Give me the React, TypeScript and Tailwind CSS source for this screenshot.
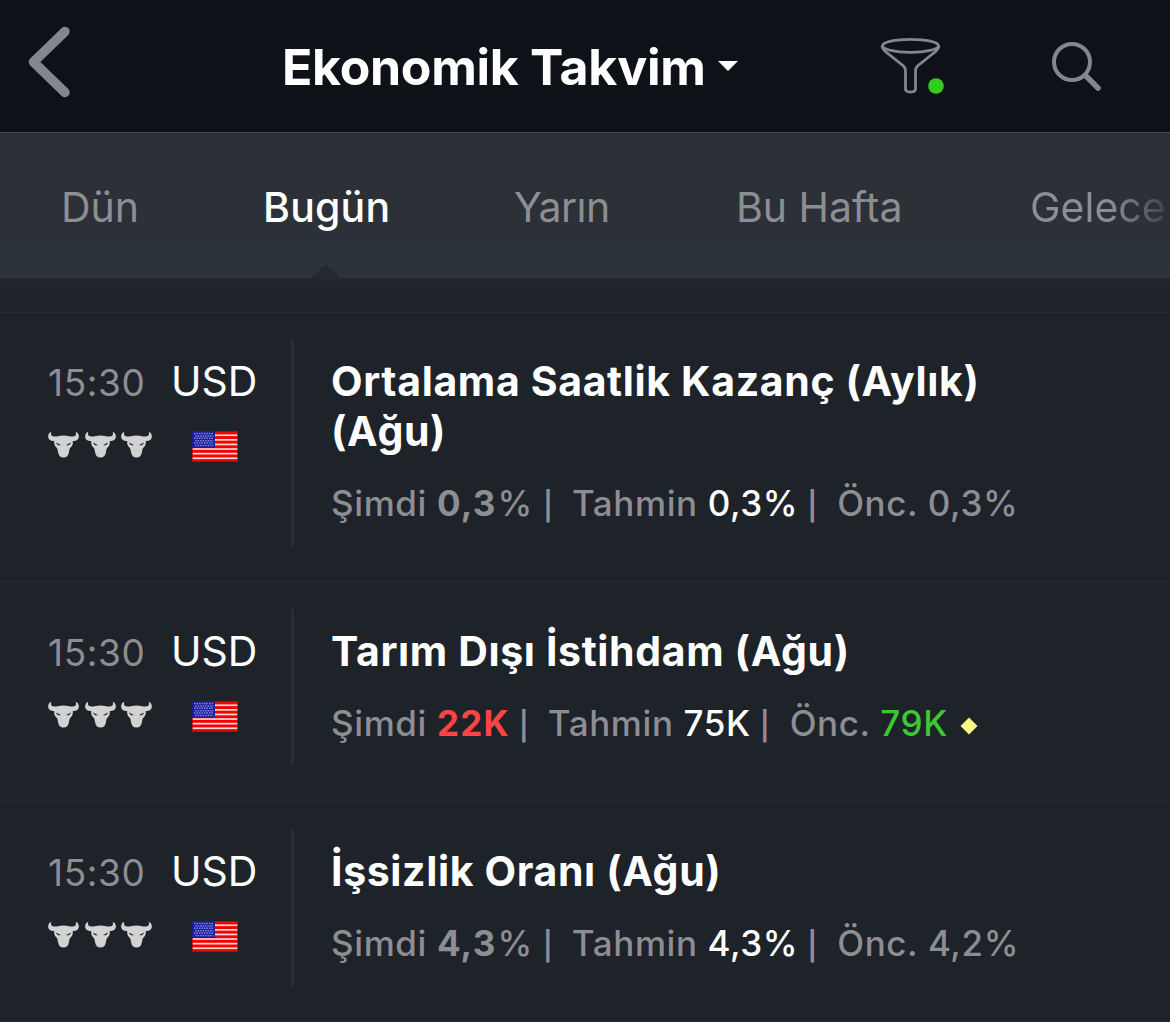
const tabs = [
  { label: "Dün", className: "ml-[61px] w-[202px] text-[#8d8e93]" },
  { label: "Bugün", className: "w-[251px] font-medium text-white tracking-[0.2px]" },
  { label: "Yarın", className: "w-[222px] text-[#8d8e93] tracking-[-0.5px]" },
  { label: "Bu Hafta", className: "w-[294px] text-[#8d8e93]" },
];

const events = [
  {
    title: "Ortalama Saatlik Kazanç (Aylık) (Ağu)",
    height: "h-[269px] pt-[25px]",
    now: "0,3",
    unit: "%",
    nowColor: "text-[#8d8e93]",
    forecast: "0,3%",
    prev: "0,3%",
    prevColor: "text-[#8d8e93]",
    revised: false,
  },
  {
    title: "Tarım Dışı İstihdam (Ağu)",
    height: "h-[220px] pt-[26px]",
    now: "22K",
    unit: "",
    nowColor: "text-[#ff4444]",
    forecast: "75K",
    prev: "79K",
    prevColor: "text-[#3cc832]",
    revised: true,
  },
  {
    title: "İşsizlik Oranı (Ağu)",
    height: "h-[220px] pt-[26px]",
    now: "4,3",
    unit: "%",
    nowColor: "text-[#8d8e93]",
    forecast: "4,3%",
    prev: "4,2%",
    prevColor: "text-[#8d8e93]",
    revised: false,
  },
];

function Bull() {
  return (
    <svg width="31" height="27" viewBox="0 0 31 27" className="shrink-0">
      <path
        d="M3.4 0.8C0 1.8-0.8 6.4 1.2 8.4C2.6 9.8 4.6 9.8 6.2 9.9C6 12 6.2 14.8 8.4 16.6C9.8 18 9.6 19.6 10.2 21.8C10.8 25 12.2 26.5 15.5 26.5C18.8 26.5 20.2 25 20.8 21.8C21.4 19.6 21.2 18 22.6 16.6C24.8 14.8 25 12 24.8 9.9C26.4 9.8 28.4 9.8 29.8 8.4C31.8 6.4 31 1.8 27.6 0.8C28.8 3.4 27.6 5.4 24.6 5.5C21.6 5.4 18.8 4.4 15.5 4.4C12.2 4.4 9.4 5.4 6.4 5.5C3.4 5.4 2.2 3.4 3.4 0.8Z"
        fill="#d2d2d2"
      />
      <path d="M8 11.4L12.8 14C11.6 14.8 8.8 14.2 8 11.4ZM23 11.4L18.2 14C19.4 14.8 22.2 14.2 23 11.4Z" fill="#1e2229" />
    </svg>
  );
}

function Flag() {
  return (
    <svg width="46" height="31" viewBox="0 0 46 31" className="shrink-0">
      <rect width="46" height="31" fill="#f00505" />
      {[3.4, 8, 12.6, 17.2, 21.8, 26.4].map((y) => (
        <rect key={y} y={y} width="46" height="1.7" fill="#ffd6d6" />
      ))}
      <path d="M0.5 0.5H45.5V30.5H0.5Z" fill="none" stroke="#b00000" strokeOpacity="0.7" />
      <rect width="23" height="17" fill="#1c1c96" />
      {[2.5, 4.9, 7.3, 9.7, 12.1, 14.5].map((y, i) => (
        <path key={y} d={i % 2 ? "M3.2 0H21.5" : "M2 0H21.5"} transform={`translate(0 ${y})`} stroke="#8484dc" strokeWidth="1.5" strokeDasharray="1.5 1" />
      ))}
    </svg>
  );
}

function Separator({ className }: { className: string }) {
  return <span className={`w-[10px] text-center text-[28px] font-semibold ${className}`}>|</span>;
}

function EventRow({ event }: { event: (typeof events)[number] }) {
  return (
    <div className={`flex border-t border-[#282c33] pb-[35px] ${event.height}`}>
      <div className="w-[291px] shrink-0 pt-[18px] pl-[48px]">
        <div className="flex items-baseline leading-[50px]">
          <span className="w-[123px] text-[37px] tracking-[0.6px] text-[#8d8e93]">15:30</span>
          <span className="text-[41px] text-white">USD</span>
        </div>
        <div className="mt-[23px] flex">
          <div className="flex w-[144px] gap-[5.5px]">
            <Bull />
            <Bull />
            <Bull />
          </div>
          <Flag />
        </div>
      </div>
      <div className="mt-px w-[3px] shrink-0 bg-[#282c33]" />
      <div className="pt-[18px] pl-[37px]">
        <h2 className="w-[700px] text-[41px] leading-[50px] font-bold tracking-[0.64px] text-white">{event.title}</h2>
        <p className="mt-[25px] flex items-baseline text-[35px] leading-[44px] font-medium tracking-[0.6px] whitespace-pre text-[#8d8e93]">
          <span>Şimdi </span>
          <span className={`font-bold tracking-[1.2px] ${event.nowColor}`}>{event.now}</span>
          {event.unit && <span className="mr-px ml-px">{event.unit}</span>}
          <Separator className="mr-[19px] ml-[9px]" />
          <span>Tahmin </span>
          <span className="text-white">{event.forecast}</span>
          <Separator className="mr-[20px] ml-[9px]" />
          <span>Önc. </span>
          <span className={event.prevColor}>{event.prev}</span>
          {event.revised && <span className="mt-[2px] ml-[15px] size-[12px] rotate-45 self-center bg-[#fffa82]" />}
        </p>
      </div>
    </div>
  );
}

export default function App() {
  return (
    <div className="h-[1022px] w-[1170px] overflow-hidden bg-[#1e2229] font-['Inter',sans-serif]">
      <header className="flex h-[132px] bg-[#0e1117]">
        <svg width="44" height="72" viewBox="0 0 44 72" className="mt-[26px] ml-[28px] shrink-0">
          <path d="M37 5.5L5.5 36L37 66.5" fill="none" stroke="#84868c" strokeWidth="9.5" strokeLinecap="round" strokeLinejoin="round" />
        </svg>
        <div className="ml-[210px] flex h-full w-[598px] items-center">
          <h1 className="mt-[2px] text-[50px] leading-[60px] font-bold tracking-[-0.3px] whitespace-nowrap text-white">Ekonomik Takvim</h1>
          <svg width="20" height="10" viewBox="0 0 20 10" className="ml-[12px] shrink-0">
            <path d="M0 0H20L10 10Z" fill="#fff" />
          </svg>
        </div>
        <svg width="66" height="60" viewBox="0 0 66 60" className="mt-[36px] shrink-0" fill="none" stroke="#84868c" strokeWidth="2.8">
          <ellipse cx="30.5" cy="9.8" rx="28" ry="6.5" />
          <path d="M2.1 10C2.1 13.5 5.5 15.5 8.5 18L23.5 30Q25.5 32 25.5 35V53Q25.5 56 30.5 56Q35.5 56 35.5 53V35Q35.5 32 37.5 30L52.5 18C55.5 15.5 58.9 13.5 58.9 10" />
          <circle cx="56" cy="50" r="7.8" fill="#32cd1e" stroke="none" />
        </svg>
        <svg width="52" height="52" viewBox="0 0 52 52" className="mt-[41px] ml-[105px] shrink-0" fill="none" stroke="#84868c" strokeLinecap="round">
          <circle cx="21" cy="21" r="18" strokeWidth="4" />
          <path d="M35 35L47 47" strokeWidth="5.5" />
        </svg>
      </header>

      <nav className="relative flex h-[146px] overflow-hidden border-t border-[#484b52] bg-linear-to-b from-[#2b2e35] to-[#2c333a] pt-[49px] text-[41px] leading-[50px] whitespace-nowrap">
        {tabs.map((tab) => (
          <span key={tab.label} className={`shrink-0 ${tab.className}`}>
            {tab.label}
          </span>
        ))}
        <span className="shrink-0 bg-linear-to-r from-[#8d8e93] from-[80px] to-transparent to-[150px] bg-clip-text text-transparent">Gelece</span>
        <svg width="28" height="14" viewBox="0 0 28 14" className="absolute bottom-0 left-[312px]">
          <path d="M0 14L13.5 1.5L27 14" fill="#252a31" stroke="#1e2229" />
        </svg>
      </nav>
      <div className="h-[34px] bg-linear-to-b from-[#23272e] to-[#1e2229] to-50%" />

      {events.map((event) => (
        <EventRow key={event.title} event={event} />
      ))}
      <div className="h-px bg-[#282c33]" />
    </div>
  );
}
